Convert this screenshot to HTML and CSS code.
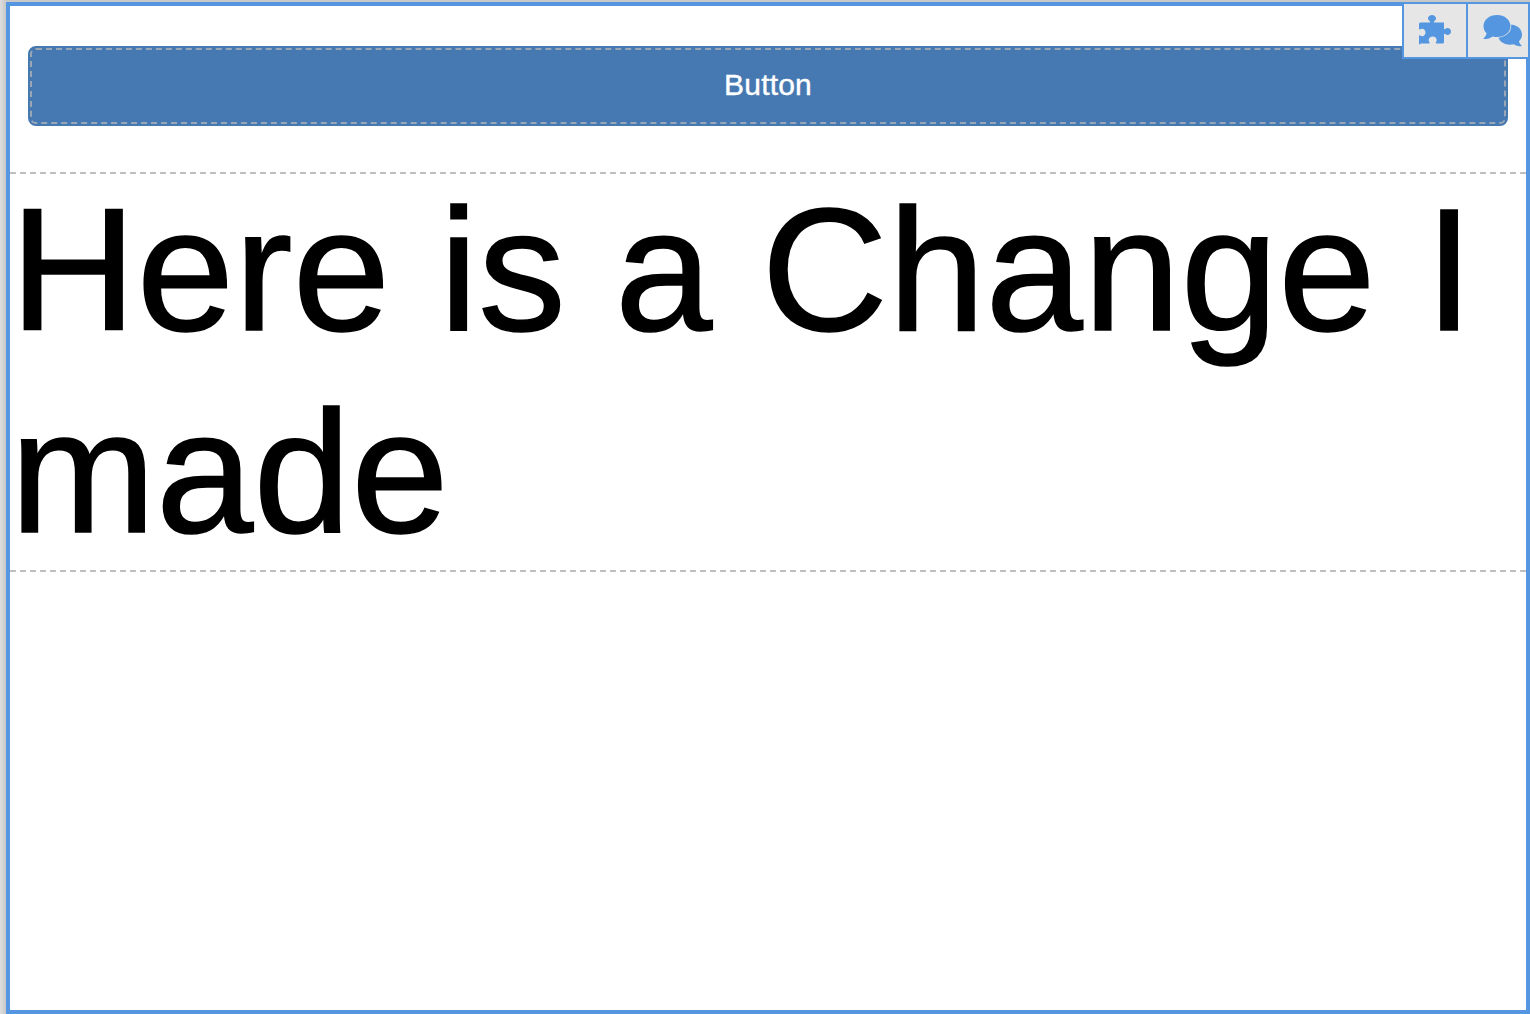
FILE: index.html
```html
<!DOCTYPE html>
<html lang="en">

<head>
    <meta charset="UTF-8">
    <title>Editor Preview</title>
    <link rel="stylesheet" href="styles.css">
</head>

<body>
<div class="frame">
    <div class="toolbar">
        <div class="tool">
            <svg class="tool-icon" width="32" height="32" viewBox="0 0 32 32">
                <path fill="#5596e0" d="M1.500 7.500H10.500c.8 0 1-.6.5-1.200C10 5.500 9 4.800 9 3.500 9 1.500 11 0 13 0s4 1.500 4 3.500c0 1.300-1 2-2 2.800-.5.600-.3 1.200.5 1.200H25v6c0 .8.600 1 1.200.5.8-.7 1.400-1 2.300-1 1.900 0 3.500 1.500 3.500 3.500s-1.600 3.500-3.500 3.500c-.9 0-1.500-.3-2.300-1-.6-.5-1.200-.3-1.200.5v7.500a1.500 1.500 0 0 1-1.500 1.500H17.500c-.8 0-1-.6-.6-1.200.5-.7.800-1.300.8-2.100 0-2-1.700-3.700-4-3.700s-4 1.700-4 3.700c0 .8.300 1.400.8 2.100.4.600.2 1.200-.6 1.200H1.500A1.500 1.500 0 0 1 0 29.500V21c0-.8.500-1 1.100-.6.700.5 1.300.8 2.100.8 1.900 0 3.300-1.800 3.300-3.700s-1.400-3.700-3.300-3.700c-.8 0-1.400.3-2.100.8C.5 14.400 0 14.200 0 13.400V9A1.500 1.500 0 0 1 1.500 7.500z"/>
            </svg>
        </div>
        <div class="tool">
            <svg class="tool-icon" width="39" height="32" viewBox="0 0 39 32">
                <path fill="#5596e0" d="M27 9.500c6.600 0 12 4.200 12 10 0 2.700-1.100 5-3 6.800.2 1.600 1.200 3 2.500 4.200.3.400.1.800-.4.800-2.800 0-5.200-.8-7.200-2.100-1.300.300-2.600.5-3.900.5-6.600 0-12-4.200-12-10 0-5.800 5.400-10.200 12-10.200z"/>
                <path fill="#5596e0" stroke="#e6e6e6" stroke-width="1.500" paint-order="stroke" d="M14 0C21.500 0 27.500 4.900 27.500 11S21.500 22 14 22c-1.500 0-3-.2-4.300-.6C7.500 23 4.500 24 1 24c-.5 0-.7-.4-.4-.8 1.500-1.300 2.700-3 3-5C1.500 16.300.5 13.800.5 11 .5 4.900 6.500 0 14 0z"/>
            </svg>
        </div>
    </div>

    <div class="button-wrap">
        <button class="btn-primary">Button</button>
    </div>

    <div class="text-block">
        <div class="text-line">Here is a Change I made</div>
    </div>
</div>
</body>

</html>
```

FILE: styles.css
```css
* {
    box-sizing: border-box;
}

html, body {
    height: 100%;
}

body {
    margin: 0;
    padding: 2px 0 0 6px;
    background: linear-gradient(to right, #dedede, #c8c8c8 6px);
    font-family: "Liberation Sans", Arial, sans-serif;
}

.frame {
    position: relative;
    height: 100%;
    background-color: #fff;
    border: 4px solid #5596e0;
}

.toolbar {
    position: absolute;
    top: -4px;
    right: -4px;
    z-index: 10;
    display: flex;
    height: 57px;
    border: 2px solid #5596e0;
}

.tool {
    display: flex;
    align-items: center;
    justify-content: center;
    width: 62px;
    background-color: #e6e6e6;
}

.tool + .tool {
    width: 62px;
    padding-left: 9px;
    border-left: 2px solid #5596e0;
}

.button-wrap {
    padding: 40px 18px 46px;
    border-bottom: 2px dashed #bfbfbf;
}

.btn-primary {
    position: relative;
    display: block;
    width: 100%;
    height: 80px;
    padding: 0 0 2px;
    color: #fff;
    background-color: #4679b2;
    border: 2px solid #4679b2;
    border-radius: 8px;
    font-family: inherit;
    font-size: 30px;
    letter-spacing: 0.2px;
    -webkit-text-stroke: 0.4px #fff;
}

.btn-primary::before {
    content: "";
    position: absolute;
    top: 0;
    right: 0;
    bottom: 0;
    left: 0;
    border: 2px dashed #98a6b6;
    border-radius: 6px;
}

.text-block {
    display: flow-root;
    height: 398px;
    border-bottom: 2px dashed #bfbfbf;
}

.text-line {
    margin-top: -5px;
    font-size: 175px;
    line-height: 202px;
    letter-spacing: 0.25px;
    color: #000;
    -webkit-text-stroke: 1.5px #000;
}
```
